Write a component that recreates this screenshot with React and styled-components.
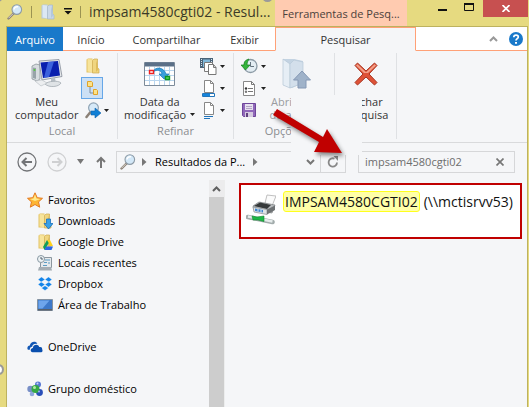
import React from 'react';
import styled, { createGlobalStyle, css } from 'styled-components';

const Global = createGlobalStyle`
  * { box-sizing: border-box; }
  html, body, #root { height: 100%; }
  body { margin: 0; overflow: hidden; font: 11px/16px "Open Sans", "Noto Sans", sans-serif; color: #000; }
  button, input { font: inherit; color: inherit; }
  button { padding: 0; border: 0; background: none; }
  svg { display: block; flex: none; }
`;

const Window = styled.div`
  position: relative;
  display: flex;
  flex-direction: column;
  height: 100vh;
  padding: 0 1px 0 6px;
  background: #e6da80;
`;
const TitleBar = styled.header`
  display: grid;
  grid-template-columns: 269px 132px 1fr;
  height: 26px;
`;
const TitleLeft = styled.div`
  display: flex;
  align-items: center;
  gap: 8px;
  padding: 0 0 3px 1px;
  white-space: nowrap;
`;
const Bar = styled.i`
  width: 1px;
  height: 12px;
  background: #9b9352;
`;
const Title = styled.h1`
  margin: 0;
  font-size: 14px;
  line-height: 22px;
  font-weight: 400;
  color: #3c3a28;
`;
const ToolHeading = styled.div`
  display: flex;
  align-items: center;
  justify-content: center;
  padding-top: 2px;
  background: #ffcbb0;
  color: #4b413b;
  white-space: nowrap;
`;
const Caption = styled.div`
  display: flex;
  justify-content: flex-end;
  align-items: flex-start;
`;
const CaptionButton = styled.button`
  display: grid;
  place-items: center;
  width: ${p => (p.$close ? 45 : 27)}px;
  height: ${p => (p.$close ? 17 : 15)}px;
  background: ${p => (p.$close ? '#c75050' : 'transparent')};
`;
const Client = styled.div`
  flex: 1;
  min-height: 0;
  display: flex;
  flex-direction: column;
  border: solid #bdb25f;
  border-width: 1px 1px 0 1px;
  background: #f5f6f8;
`;
const Tabs = styled.nav`
  display: grid;
  grid-template-columns: 56px 56px 95px 61px 141px 1fr;
  height: 24px;
  background: #fff;
`;
const Tab = styled.button`
  padding-top: 2px;
  border-bottom: 1px solid #ffa177;
  color: #333;
  ${p => p.$file && css`background: #1979ca; color: #fff; border-bottom-color: #1979ca;`}
  ${p => p.$active && css`
    background: #f5f6f8;
    border: 1px solid #ffa177;
    border-bottom-color: #f5f6f8;
  `}
`;
const TabEnd = styled.div`
  display: flex;
  align-items: center;
  justify-content: flex-end;
  gap: 11px;
  padding-right: 4px;
  border-bottom: 1px solid #ffa177;
`;
const Ribbon = styled.section`
  display: grid;
  grid-template-columns: 111px 116px 101px 62px 1fr;
  height: 92px;
  padding: 2px 0 3px;
  border-bottom: 1px solid #d9dadc;
`;
const Group = styled.div`
  display: grid;
  grid-template-rows: 1fr 16px;
  min-width: 0;
  border-right: 1px solid #dfe1e4;
`;
const Tools = styled.div`
  display: flex;
  align-items: flex-start;
  justify-content: ${p => p.$align || 'flex-start'};
  gap: ${p => p.$gap || 0}px;
  padding: 2px 0 0 ${p => p.$pad || 0}px;
`;
const GroupLabel = styled.div`
  text-align: center;
  color: #8b8d91;
`;
const BigButton = styled.button`
  display: grid;
  grid-template-rows: 34px auto;
  place-items: center;
  gap: 4px;
  width: ${p => p.$width}px;
  padding-top: 2px;
  line-height: 13px;
  color: ${p => (p.$dim ? '#9a9ca0' : '#333')};
  white-space: nowrap;
`;
const Line = styled.span`
  display: flex;
  align-items: center;
  justify-content: center;
  gap: 4px;
`;
const Stack = styled.div`
  display: flex;
  flex-direction: column;
  align-items: flex-start;
`;
const SmallButton = styled.button`
  display: flex;
  align-items: center;
  justify-content: center;
  gap: 3px;
  min-width: 22px;
  height: 22px;
  padding: 0 2px 0 3px;
  border: 1px solid ${p => (p.$on ? '#66a7e8' : 'transparent')};
  background: ${p => (p.$on ? '#cce0f5' : 'transparent')};
`;
const NavBar = styled.div`
  display: flex;
  align-items: center;
  gap: 10px;
  height: 37px;
  padding: 0 12px 0 10px;
`;
const IconButton = styled.button`
  display: grid;
  place-items: center;
`;
const Address = styled.div`
  display: flex;
  align-items: center;
  flex: 225 1 0;
  min-width: 0;
  height: 22px;
  padding-left: 3px;
  border: 1px solid #d6d7d9;
`;
const Crumb = styled.button`
  display: flex;
  align-items: center;
  flex: none;
  gap: 8px;
  margin: 0 auto 0 6px;
`;
const Refresh = styled.button`
  display: grid;
  place-items: center;
  width: 25px;
  height: 20px;
  margin-left: 5px;
  border-left: 1px solid #d6d7d9;
`;
const Search = styled.label`
  display: flex;
  align-items: center;
  flex: 139 1 0;
  min-width: 0;
  height: 22px;
  margin-left: 2px;
  padding: 0 10px 0 6px;
  border: 1px solid #d6d7d9;
  color: #6d6d6d;
  input { flex: 1; min-width: 0; padding: 0; border: 0; outline: 0; background: none; }
`;
const Body = styled.div`
  flex: 1;
  min-height: 0;
  display: grid;
  grid-template-columns: 202px 16px minmax(0, 1fr);
`;
const Tree = styled.ul`
  list-style: none;
  margin: 0;
  padding: 9px 0 0;
`;
const Item = styled.li`
  margin-top: ${p => (p.$section ? 21 : 0)}px;
  a {
    display: flex;
    align-items: center;
    gap: 5px;
    height: 21px;
    padding-left: ${p => (p.$child ? 30 : 20)}px;
    color: #000;
    text-decoration: none;
  }
`;
const Scroll = styled.div`
  display: flex;
  flex-direction: column;
  border-right: 1px solid #eceded;
  background: #ececed;
`;
const ScrollUp = styled.button`
  display: grid;
  place-items: center;
  height: 17px;
`;
const Thumb = styled.div`
  flex: 1;
  background: #cdcdcd;
`;
const Results = styled.main`
  padding: 3px 5px 0 14px;
`;
const Result = styled.a`
  display: flex;
  align-items: flex-start;
  height: 56px;
  padding: 6px 0 0 5px;
  border: 2px solid #c00000;
  background: #fff;
  color: #111;
  font-size: 14px;
  line-height: 19px;
  text-decoration: none;
  white-space: nowrap;
`;
const PrinterBox = styled.span`
  padding-top: 3px;
`;
const Mark = styled.mark`
  margin: 0 4px 0 7px;
  padding: 0 1px;
  border: 1px solid #ffff1e;
  border-radius: 3px;
  background: #ffffa8;
  color: inherit;
`;
const Host = styled.span`
  padding-top: 1px;
`;
const Patch = styled.div`
  position: absolute;
  left: 291px;
  top: 95px;
  width: 71px;
  height: 60px;
  background: #f5f6f8;
`;
const Pointer = styled.svg`
  position: absolute;
  left: 268px;
  top: 100px;
  filter: drop-shadow(2px 3px 2px rgba(0, 0, 0, 0.45));
`;
const Handle = styled.i`
  position: absolute;
  left: ${p => p.$x}px;
  top: ${p => p.$y}px;
  width: 11px;
  height: 11px;
  border: 2px solid #9a9a9a;
  border-radius: 50%;
  background: #fff;
`;

const Lens = () => (
  <svg width="16" height="16" viewBox="0 0 16 16">
    <path d="M1.500 14.500 6.500 9.500" stroke="#8b8177" strokeWidth="2.400" strokeLinecap="round" />
    <path d="M1.500 14.200 6 9.700" stroke="#dcd8d0" strokeWidth="1" />
    <circle cx="9.800" cy="5.600" r="4.800" fill="#d3e8f8" stroke="#8d9ba6" strokeWidth="1.100" />
    <path d="M7 5.500a3.200 3.200 0 0 1 4-2.700" stroke="#fff" strokeWidth="1.500" fill="none" />
  </svg>
);
const Down = ({ w = 5, c = '#222' }) => (
  <svg width={w} height={w > 5 ? 5 : 3} viewBox="0 0 6 4" preserveAspectRatio="none"><path d="M0 0h6L3 4z" fill={c} /></svg>
);
const Folder = ({ blue, badge }) => (
  <svg width="16" height="16" viewBox="0 0 16 16">
    <path d="M1.500 1.500 3 .5h4.500v14H1.500z" fill={blue ? '#b5c8dc' : '#e3c263'} />
    <path d="m2.500 1 5 .5v13l-5-1z" fill={blue ? '#dce8f4' : '#f7e49b'} />
    <path d="M7.500 2.500 9 1h3.500v9l1.500 1v4H7.500z" fill={blue ? '#cad8e8' : '#f0d680'} stroke={blue ? '#a4b8cd' : '#cfaa4a'} strokeWidth=".7" />
    <path d="M11 2v12l2-2V9" fill={blue ? '#b4c8dd' : '#e0bd5b'} />
    {badge === 'down' && <path d="M9.500 6h4v4.500H16L11.500 16 7 10.500h2.500z" fill="#38a0e8" stroke="#1b70bc" strokeWidth=".8" />}
    {badge === 'drive' && (
      <g>
        <path d="M10 6h3l3 6h-3z" fill="#ffd21e" />
        <path d="M10 6 6 13l1.700 3 4-7z" fill="#129e58" />
        <path d="M9 12.500h7L14.500 16H7.500z" fill="#2a66e8" />
      </g>
    )}
  </svg>
);
const Computer = () => (
  <svg width="32" height="30" viewBox="0 0 32 30">
    <path d="m1 7 4-2 4 1v14l-3 2-5-2z" fill="#d8dde0" stroke="#7f898f" strokeWidth=".7" />
    <path d="m2 8.500 3 .5v11l-3-1z" fill="#98a3a9" />
    <circle cx="3.500" cy="11" r="1" fill="#52d13a" />
    <path d="m8 2 20-1.500 3 17L11 21z" fill="#e5e8eb" stroke="#858d98" strokeWidth=".8" />
    <path d="m9.500 3.500 17.500-1.500 2 14.500L12 19z" fill="#0a1fae" />
    <path d="m17 3 6-.5-5 15.500-5 .7z" fill="#4d78ec" opacity=".75" />
    <path d="m20 19.500 4-.5 1 5h-5z" fill="#b9c0c7" />
    <path d="M14 25c3-3 13-4 16-1-2 4-12 5-16 1z" fill="#dfe3e6" stroke="#9aa2a9" strokeWidth=".7" />
    <path d="m4 22 7-1 5 3-6 3z" fill="#eceef0" stroke="#b4babf" strokeWidth=".6" />
  </svg>
);
const TreeIcon = () => (
  <svg width="14" height="18" viewBox="0 0 14 18">
    <path d="M4 7v7h4" fill="none" stroke="#7d8da0" />
    <path d="M1.500 2.500h4l1 1v4h-5zM7.500 10.500h3l1 1v4h-4z" fill="#fbe28a" stroke="#e0a32a" />
  </svg>
);
const LensGo = () => (
  <svg width="16" height="17" viewBox="0 0 16 17">
    <path d="m1.500 15 4-5" stroke="#8b8177" strokeWidth="2.500" strokeLinecap="round" />
    <circle cx="8.500" cy="5.800" r="4.900" fill="#d6e9f8" stroke="#8fa3b4" strokeWidth="1.200" />
    <path d="M6 9h4V6l6 5-6 5v-3H6z" fill="#0f7fd6" stroke="#0b62ad" strokeWidth=".6" />
  </svg>
);
const Calendar = () => (
  <svg width="32" height="26" viewBox="0 0 32 26">
    <path d="M.500 1.500h30v23H.500z" fill="#fff" stroke="#7c8a99" />
    <path d="M1 1.500h29v4H1z" fill="#5b7088" />
    <path d="M5.500 6v18M10.500 6v18M15.500 6v18M20.500 6v18M25.500 6v18M1 9.500h29M1 14.500h29M1 19.500h29" stroke="#b8d5ee" />
    <path d="M9 11c2-6 11-5 13 2h3l-5 5-5-5h3c-1-4-5-5-9-2z" fill="#3a9fdb" stroke="#1b78b8" strokeWidth=".7" />
    <path d="M5.500 9.500h4v3h-4z" fill="#fff" stroke="#e22" strokeWidth="1.400" />
    <path d="M21.500 15.500h4v3h-4z" fill="#5bde5b" stroke="#119522" strokeWidth="1.400" />
  </svg>
);
const Page = ({ kind }) => (
  <svg width="17" height="17" viewBox="0 0 17 17">
    {kind === 'multi' && (
      <g>
        <path d="M0 0h13v10H0z" fill="#4a6378" />
        <path d="M1.500 1v8M11.500 1v8" stroke="#d5e4ee" strokeDasharray="1 1" />
        <path d="M3 1.500h7V9H3z" fill="#80b9db" />
        <path d="M4.500 4.500h8v9h-8z" fill="#fff" stroke="#7b7b7b" />
        <path d="M8.500 6.500h5l2.500 3v7H8.500z" fill="#fff" stroke="#777" />
        <path d="M13.500 6.500v3H16" fill="none" stroke="#777" />
      </g>
    )}
    {(kind === 'size' || kind === 'props') && (
      <g>
        <path d="M4.500.500h6l3 3v9h-9z" fill="#fff" stroke="#888" />
        <path d="M10.500.500v3h3" fill="none" stroke="#888" />
      </g>
    )}
    {kind === 'size' && <path d="M2.500 13.500h12v3h-12z" fill="#fff" stroke="#2175bb" />}
    {kind === 'size' && <path d="M3 14h7v2H3z" fill="#1585dd" />}
    {kind === 'props' && <path d="M4 14.500h9M4 16.500h6" stroke="#2175bb" />}
    {kind === 'list' && (
      <g>
        <path d="M2.500 1.500h8l3 3v11h-11z" fill="#fff" stroke="#888" />
        <path d="M10.500 1.500v3h3M7 8.500h5M7 11.500h5" fill="none" stroke="#777" />
        <circle cx="5" cy="8.500" r="1.200" fill="#333" /><circle cx="5" cy="11.800" r="1.200" fill="#777" />
      </g>
    )}
  </svg>
);
const Recent = () => (
  <svg width="17" height="17" viewBox="0 0 17 17">
    <circle cx="9.500" cy="8" r="6.500" fill="#e3edf3" stroke="#8b9aa5" strokeWidth="1.300" />
    <path d="M9.500 4v4.500H13" fill="none" stroke="#657480" />
    <path d="M8 1C4 2 3 4 3 7H0l4.500 5L9 7H6c0-3 1-4 2-6z" fill="#35b53c" stroke="#16821e" strokeWidth=".7" />
  </svg>
);
const Save = () => (
  <svg width="16" height="16" viewBox="0 0 16 16">
    <path d="M1.500 1.500h13v13h-12l-1-1z" fill="#9068ba" stroke="#6e469a" />
    <path d="M4 2h8v6H4z" fill="#e7e1ef" /><path d="M5 4.500h6M5 6.500h6" stroke="#b2a4c4" />
    <path d="M4 10h8v5H4z" fill="#d5cbe0" /><path d="M5 11h2v4H5z" fill="#60407f" />
  </svg>
);
const OpenFolder = () => (
  <svg width="30" height="32" viewBox="0 0 30 32">
    <path d="M1 1 12 1l9 2v22l-11 5-9-3z" fill="#c3d3e2" />
    <path d="m1 1 7 5v24l-7-3z" fill="#e6eef5" stroke="#b5c5d6" strokeWidth=".7" />
    <path d="m8 6 4-4 9 2v21L8 30z" fill="#d3dfeb" stroke="#b8c8d8" strokeWidth=".7" />
    <path d="m20 13 8.500 9h-4.500v8h-8v-8h-4.500z" fill="#9fb2c9" stroke="#8598b4" />
  </svg>
);
const RedX = () => (
  <svg width="24" height="24" viewBox="0 0 24 24">
    <path d="m3.500 1 8.500 8 8.500-8L23 3.500 15 12l8 8.500-2.500 2.500-8.500-8-8.500 8L1 20.500 9 12 1 3.500z" fill="#df5237" stroke="#a83521" strokeLinejoin="round" />
    <path d="m3.500 2.200 8.500 8 8.500-8 1.500 1.300-8 7.500h-4L2 3.500z" fill="#f4a089" />
  </svg>
);
const Star = () => (
  <svg width="16" height="16" viewBox="0 0 16 16">
    <path d="m8 .8 2.200 4.900 5.300.6-4 3.600 1.200 5.300L8 12.500l-4.700 2.700 1.200-5.300-4-3.600 5.300-.6z" fill="#fdb534" stroke="#e47a22" />
    <path d="m8 2.500 1.500 4 4 .5-5.500 2-5-2 3.500-.5z" fill="#ffe98b" />
  </svg>
);
const Places = () => (
  <svg width="16" height="16" viewBox="0 0 16 16">
    <path d="M5 2.500h9.500v10H3.500V8" fill="#e5e9ec" stroke="#8b969e" />
    <path d="M8 5h5M7 7.500h3M11 8h2M6 10.500h4" stroke="#5d9cc2" strokeWidth="1.200" />
    <path d="m2 12-1 3.500h14L14 12z" fill="#a5adb3" />
    <circle cx="4" cy="4" r="3.500" fill="#edf2f4" stroke="#8797a2" /><path d="M4 2v2h2" fill="none" stroke="#526371" />
  </svg>
);
const Dropbox = () => (
  <svg width="16" height="16" viewBox="0 0 16 16">
    <path d="M4.500 1 8 3.500 4.200 6 1 3.500zM11.500 1 8 3.500 11.800 6 15 3.500zM4.200 6 8 8.500 4.500 11 1 8.500zM11.800 6 8 8.500l3.500 2.500L15 8.500zM4.500 12 8 9.800l3.500 2.200L8 14.500z" fill="#1284ea" stroke="#f5f6f8" strokeWidth=".4" />
  </svg>
);
const Desktop = () => (
  <svg width="16" height="16" viewBox="0 0 16 16">
    <path d="M.500 2.500h15v11H.500z" fill="#3d78c9" stroke="#8492a1" /><path d="M1.500 3.500h11l-7 8h-4z" fill="#6ea5ec" />
    <path d="M1 12h14v1.500H1z" fill="#59616b" />
  </svg>
);
const Cloud = () => (
  <svg width="16" height="16" viewBox="0 0 17 16">
    <path d="M1 11c-1.500-2 0-4.500 2-4.500C3.500 2 9.500 1 11 4.500 7 4 5.500 6 5.500 7.800 3.500 8 3 9.500 3 11z" fill="#1257b5" />
    <path d="M6 13.500c-3-.5-2.500-4.300.3-4.500C6.500 5 12 4.500 13 8c3-.3 3.300 1 3 2 1 1.500.5 3.500-1 3.500z" fill="#0a4fae" />
  </svg>
);
const HomeGroup = () => (
  <svg width="16" height="16" viewBox="0 0 16 16">
    <circle cx="11" cy="3.500" r="3" fill="#5878d3" /><circle cx="3.500" cy="8" r="3.200" fill="#788fc7" />
    <circle cx="12.500" cy="11.500" r="3.400" fill="#294fb9" /><circle cx="5" cy="13" r="2.300" fill="#8fa7dc" />
    <circle cx="8.500" cy="8" r="4" fill="#35a845" /><circle cx="7.500" cy="6.500" r="1.500" fill="#b2eaa6" />
    <circle cx="10.500" cy="2.500" r="1" fill="#c6d3f6" /><circle cx="12" cy="10.500" r="1" fill="#9db3ef" />
  </svg>
);
const Printer = () => (
  <svg width="30" height="32" viewBox="0 0 30 32">
    <path d="m19 9 2-8 9 1-4 10z" fill="#fbfbfb" stroke="#b0b0b0" strokeWidth=".8" />
    <path d="m7 12 6-4 16 3-3 8-18-3z" fill="#b9bcbe" stroke="#7b7f81" strokeWidth=".7" />
    <path d="m8 12 6-3.500L25 11l-4 4z" fill="#36393a" />
    <path d="m7 13 14 2.500v5L8 18z" fill="#dfe3e5" stroke="#888d90" strokeWidth=".7" />
    <path d="m9 14.500 8 1.500v2.500L9 17z" fill="#3f84cc" /><path d="M12 15v2.500M15 15.500V18" stroke="#d6e7f5" />
    <path d="m21 15.500 8-4v4.500l-8 4.500z" fill="#6e7274" />
    <path d="m2 23 24.500 5" stroke="#a3acac" strokeWidth="4.600" strokeLinecap="round" /><path d="m2 22.500 24.500 5" stroke="#e6ecec" strokeWidth="2.400" />
    <path d="m6 22 5 1 7-1v5.500l-6-1.500-5 0z" fill="#1eb847" stroke="#11882f" strokeWidth=".6" />
  </svg>
);
const Round = ({ back }) => {
  const c = back ? '#727477' : '#cfd0d2';
  return (
    <svg width="20" height="20" viewBox="0 0 20 20">
      <circle cx="10" cy="10" r="9" fill="none" stroke={c} strokeWidth="1.300" />
      <path d={back ? 'M15 10H6M9.500 6l-4 4 4 4' : 'M5 10h9M10.500 6l4 4-4 4'} fill="none" stroke={c} strokeWidth="2" />
    </svg>
  );
};
const Right = () => <svg width="5" height="8" viewBox="0 0 5 8"><path d="M0 0v8l4.500-4z" fill="#777" /></svg>;

const places = [
  { label: 'Favoritos', icon: <Star /> },
  { label: 'Downloads', icon: <Folder badge="down" />, child: true },
  { label: 'Google Drive', icon: <Folder badge="drive" />, child: true },
  { label: 'Locais recentes', icon: <Places />, child: true },
  { label: 'Dropbox', icon: <Dropbox />, child: true },
  { label: 'Área de Trabalho', icon: <Desktop />, child: true },
  { label: 'OneDrive', icon: <Cloud />, section: true },
  { label: 'Grupo doméstico', icon: <HomeGroup />, section: true },
];

export default function App() {
  return (
    <Window>
      <Global />
      <TitleBar>
        <TitleLeft>
          <Lens />
          <Bar />
          <Folder blue />
          <IconButton aria-label="Personalizar">
            <svg width="8" height="7" viewBox="0 0 8 7"><path d="M0 0h8v1.500H0zM.500 3h7L4 6.500z" fill="#111" /></svg>
          </IconButton>
          <Bar />
          <Title>impsam4580cgti02 - Resul...</Title>
        </TitleLeft>
        <ToolHeading>Ferramentas de Pesq...</ToolHeading>
        <Caption>
          <CaptionButton aria-label="Minimizar"><svg width="9" height="7"><path d="M0 5h9v2H0z" fill="#111" /></svg></CaptionButton>
          <CaptionButton aria-label="Maximizar"><svg width="11" height="9"><path d="M.500 1.500h9v6h-9z" fill="none" stroke="#111" /><path d="M0 0h10v2H0z" fill="#111" /></svg></CaptionButton>
          <CaptionButton $close aria-label="Fechar"><svg width="8" height="7"><path d="m.5 0 7 7M7.500 0l-7 7" stroke="#fff" strokeWidth="1.700" /></svg></CaptionButton>
        </Caption>
      </TitleBar>

      <Client>
        <Tabs>
          <Tab $file>Arquivo</Tab>
          <Tab>Início</Tab>
          <Tab>Compartilhar</Tab>
          <Tab>Exibir</Tab>
          <Tab $active>Pesquisar</Tab>
          <TabEnd>
            <IconButton aria-label="Minimizar a faixa"><svg width="9" height="6"><path d="m1 5 3.500-3.500L8 5" fill="none" stroke="#999" strokeWidth="2" /></svg></IconButton>
            <IconButton aria-label="Ajuda">
              <svg width="14" height="14" viewBox="0 0 14 14"><circle cx="7" cy="7" r="7" fill="#1979ca" /><path d="M4.800 5.200C4.800 2.300 9.300 2.500 9.300 5 9.300 6.500 7 6.800 7 8.500" fill="none" stroke="#fff" strokeWidth="1.700" /><path d="M6 10h2v1.700H6z" fill="#fff" /></svg>
            </IconButton>
          </TabEnd>
        </Tabs>

        <Ribbon>
          <Group>
            <Tools $pad={8} $gap={3}>
              <BigButton $width={63}><Computer /><span><Line>Meu</Line><Line>computador</Line></span></BigButton>
              <Stack>
                <SmallButton aria-label="Pasta atual"><Folder /></SmallButton>
                <SmallButton $on aria-label="Todas as subpastas"><TreeIcon /></SmallButton>
                <SmallButton aria-label="Pesquisar novamente em"><LensGo /><Down /></SmallButton>
              </Stack>
            </Tools>
            <GroupLabel>Local</GroupLabel>
          </Group>
          <Group>
            <Tools $pad={6} $gap={2}>
              <BigButton $width={70}><Calendar /><span><Line>Data da</Line><Line>modificação<Down /></Line></span></BigButton>
              <Stack>
                <SmallButton aria-label="Tipo"><Page kind="multi" /><Down /></SmallButton>
                <SmallButton aria-label="Tamanho"><Page kind="size" /><Down /></SmallButton>
                <SmallButton aria-label="Outras propriedades"><Page kind="props" /><Down /></SmallButton>
              </Stack>
            </Tools>
            <GroupLabel>Refinar</GroupLabel>
          </Group>
          <Group>
            <Tools $pad={3}>
              <Stack>
                <SmallButton aria-label="Pesquisas recentes"><Recent /><Down /></SmallButton>
                <SmallButton aria-label="Opções avançadas"><Page kind="list" /><Down /></SmallButton>
                <SmallButton aria-label="Salvar pesquisa"><Save /></SmallButton>
              </Stack>
              <BigButton $dim $width={56}><OpenFolder /><span><Line>Abrir local</Line><Line>do arquivo</Line></span></BigButton>
            </Tools>
            <GroupLabel>Opções</GroupLabel>
          </Group>
          <Group>
            <Tools $align="center"><BigButton $width={54}><RedX /><span><Line>Fechar</Line><Line>pesquisa</Line></span></BigButton></Tools>
          </Group>
        </Ribbon>

        <NavBar>
          <IconButton aria-label="Voltar"><Round back /></IconButton>
          <IconButton aria-label="Avançar"><Round /></IconButton>
          <IconButton aria-label="Locais recentes"><Down w={7} c="#777" /></IconButton>
          <IconButton aria-label="Acima"><svg width="12" height="12"><path d="M7 12V1.500M3 6l4-4 4 4" fill="none" stroke="#777" strokeWidth="2" /></svg></IconButton>
          <Address>
            <Lens />
            <Crumb><Right />Resultados da P...<Right /></Crumb>
            <svg width="9" height="6"><path d="m1 1 3.500 3.500L8 1" fill="none" stroke="#777" strokeWidth="2" /></svg>
            <Refresh aria-label="Atualizar"><svg width="12" height="12" viewBox="0 0 12 12"><path d="M10 6.500A4.200 4.200 0 1 1 7.500 2.600" fill="none" stroke="#888" strokeWidth="1.800" /><path d="M6.500 0H11v5z" fill="#888" /></svg></Refresh>
          </Address>
          <Search>
            <input aria-label="Pesquisar" defaultValue="impsam4580cgti02" />
            <IconButton aria-label="Limpar"><svg width="8" height="8"><path d="m.5.500 7 7M7.500.500l-7 7" stroke="#777" strokeWidth="1.700" /></svg></IconButton>
          </Search>
        </NavBar>

        <Body>
          <Tree>
            {places.map(p => (
              <Item key={p.label} $child={p.child} $section={p.section}><a href="#">{p.icon}{p.label}</a></Item>
            ))}
          </Tree>
          <Scroll>
            <ScrollUp aria-label="Rolar para cima"><svg width="9" height="6"><path d="m1 5 3.500-3.500L8 5" fill="none" stroke="#606060" strokeWidth="2" /></svg></ScrollUp>
            <Thumb />
          </Scroll>
          <Results>
            <Result href="#"><PrinterBox><Printer /></PrinterBox><Mark>IMPSAM4580CGTI02</Mark><Host>(\\mctisrvv53)</Host></Result>
          </Results>
        </Body>
      </Client>

      <Patch />
      <Pointer width="90" height="70" viewBox="0 0 90 70">
        <path d="M9 9 5 15l46 27-5 10 28 1-15-24-4 8z" fill="#c00000" />
      </Pointer>
      <Handle $x={-7} $y={364} />
      <Handle $x={-8} $y={-9} />
      <Handle $x={262} $y={-9} />
    </Window>
  );
}
